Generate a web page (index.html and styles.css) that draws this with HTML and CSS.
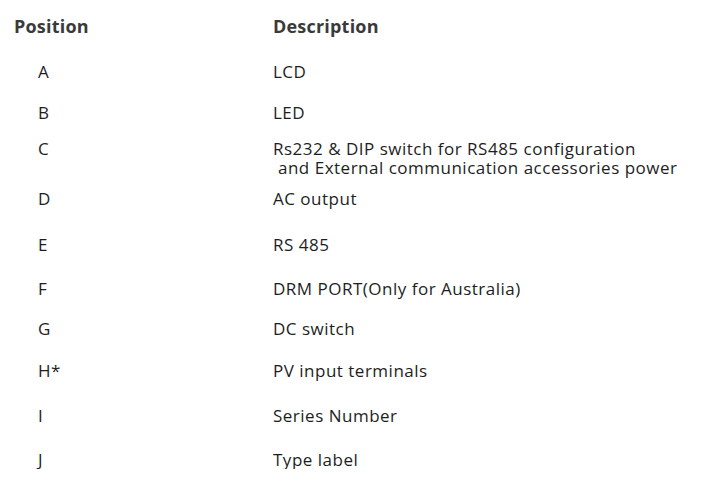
FILE: index.html
```html
<!DOCTYPE html>
<html>
<head>
<meta charset="utf-8">
<link rel="stylesheet" href="styles.css">
</head>
<body>
<div class="table">
  <div class="row head">
    <div class="pos">Position</div>
    <div class="desc">Description</div>
  </div>
  <div class="row g26">
    <div class="pos">A</div>
    <div class="desc">LCD</div>
  </div>
  <div class="row g22">
    <div class="pos">B</div>
    <div class="desc">LED</div>
  </div>
  <div class="row g17">
    <div class="pos">C</div>
    <div class="desc">
      <div class="line">Rs232 &amp; DIP switch for RS485 configuration</div>
      <div class="line indent">and External communication accessories power</div>
    </div>
  </div>
  <div class="row g12">
    <div class="pos">D</div>
    <div class="desc">AC output</div>
  </div>
  <div class="row g27">
    <div class="pos">E</div>
    <div class="desc">RS 485</div>
  </div>
  <div class="row g25">
    <div class="pos">F</div>
    <div class="desc">DRM PORT(Only for Australia)</div>
  </div>
  <div class="row g21">
    <div class="pos">G</div>
    <div class="desc">DC switch</div>
  </div>
  <div class="row g23">
    <div class="pos">H*</div>
    <div class="desc">PV input terminals</div>
  </div>
  <div class="row g26">
    <div class="pos">I</div>
    <div class="desc">Series Number</div>
  </div>
  <div class="row g25">
    <div class="pos">J</div>
    <div class="desc">Type label</div>
  </div>
</div>
</body>
</html>
```
FILE: styles.css
```css
html, body {
  margin: 0;
  padding: 0;
  background: #ffffff;
}
body {
  font-family: "Open Sans", "Noto Sans", sans-serif;
  color: #1e1e1e;
  font-size: 17px;
  letter-spacing: 0.5px;
  line-height: 19px;
}
.table {
  padding-top: 17px;
  padding-left: 14px;
}
.row {
  display: grid;
  grid-template-columns: 259px 1fr;
}
.row .pos {
  padding-left: 24px;
}
.line.indent {
  padding-left: 5px;
}
.head {
  font-weight: 700;
  color: #3a3a3a;
  font-size: 18px;
  letter-spacing: 0.2px;
}
.head .pos {
  padding-left: 0;
}
.g12 { margin-top: 12px; }
.g17 { margin-top: 17px; }
.g21 { margin-top: 21px; }
.g22 { margin-top: 22px; }
.g23 { margin-top: 23px; }
.g25 { margin-top: 25px; }
.g26 { margin-top: 26px; }
.g27 { margin-top: 27px; }
```
